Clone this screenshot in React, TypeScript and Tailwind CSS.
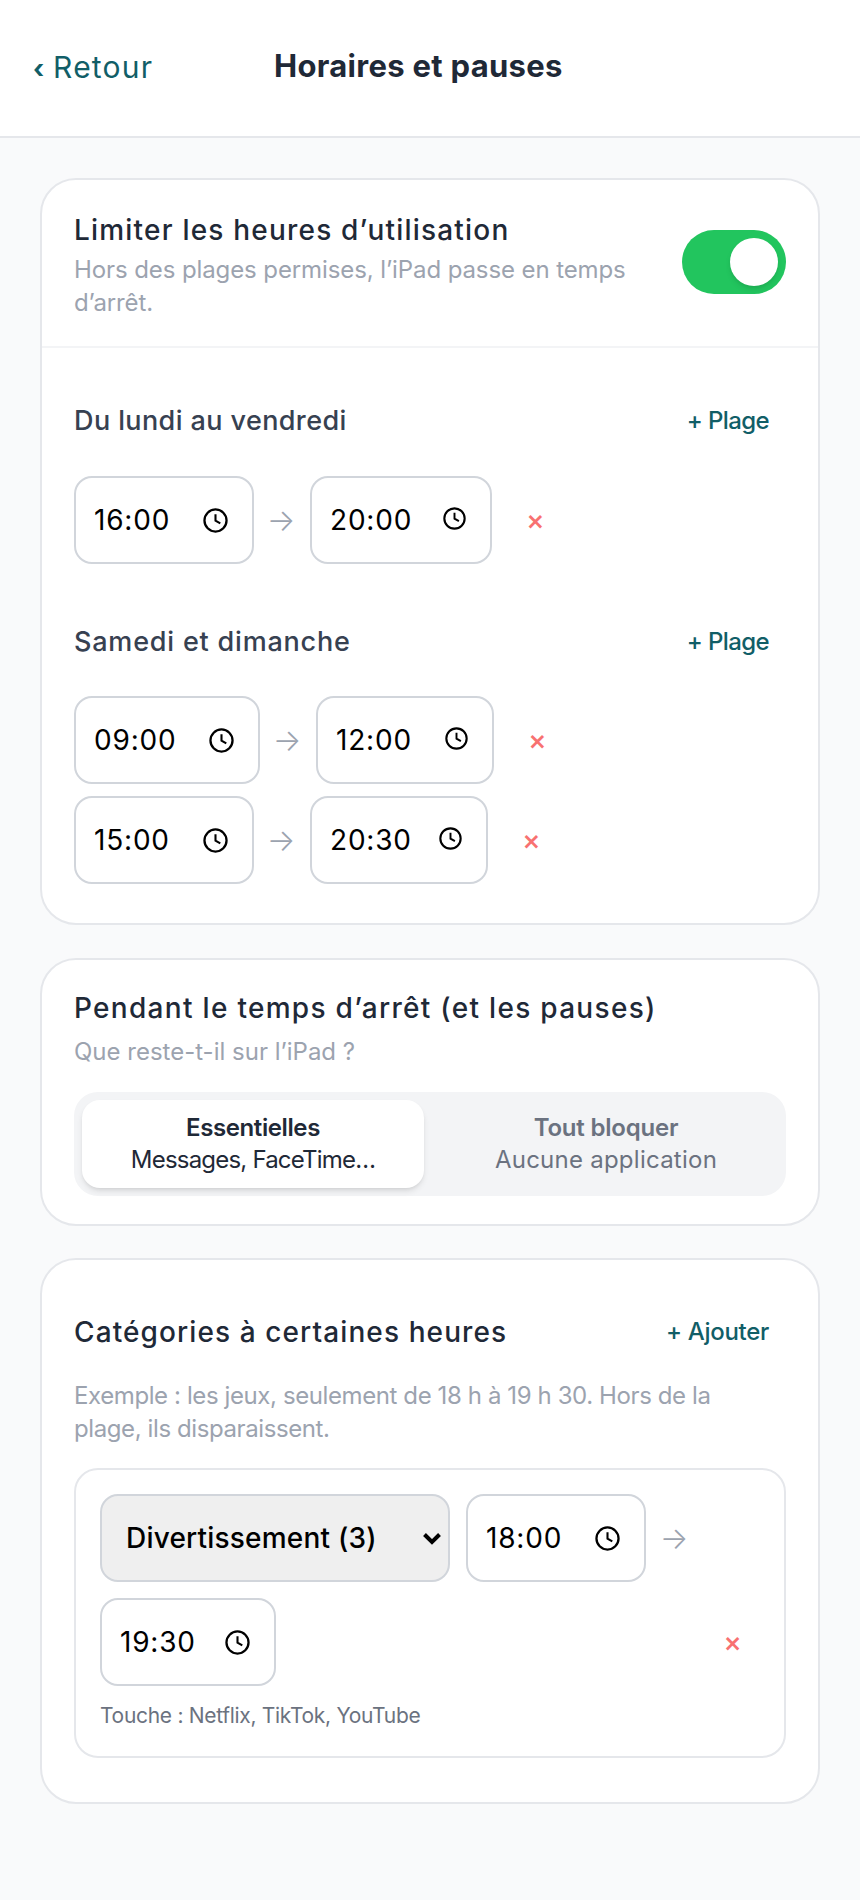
import React from "react";

function Clock({ size = 25 }: { size?: number }) {
  return (
    <svg width={size} height={size} viewBox="0 0 24 24" fill="none" stroke="#000" strokeWidth="2.2" className={`shrink-0 ${size < 25 ? "mb-[3px]" : ""}`}>
      <circle cx="12" cy="12" r="10.6" />
      <path d="M12 6v6.2l4.6 2.6" strokeWidth="2" />
    </svg>
  );
}

function TimeBox({ t, w, size }: { t: string; w: string; size?: number }) {
  return (
    <div className={`${w} h-[88px] shrink-0 rounded-[18px] border-2 border-[#d1d5db] bg-white pl-[18px] pr-[24px] flex items-center justify-between text-[28px] text-black tracking-[0.8px]`}>
      <span>{t}</span>
      <Clock size={size} />
    </div>
  );
}

function Arrow({ cls = "" }: { cls?: string }) {
  return <span className={`text-[#9ca3af] text-[30px] font-light leading-none w-[24px] flex justify-center shrink-0 ${cls}`}>→</span>;
}

function Cross({ cls = "" }: { cls?: string }) {
  return <span className={`text-[#f87171] text-[28px] font-medium leading-none ${cls}`}>×</span>;
}

function Row({ a, aw, b, bw, mt = "" }: { a: string; aw: string; b: string; bw: string; mt?: string }) {
  return (
    <div className={`flex items-center gap-[15px] ${mt}`}>
      <TimeBox t={a} w={aw} />
      <Arrow cls="mr-[2px]" />
      <TimeBox t={b} w={bw} size={23} />
      <Cross cls="ml-[19px]" />
    </div>
  );
}

export default function App() {
  return (
    <div className="min-h-[1900px] bg-[#f9fafb] [font-family:Inter,sans-serif]">
      <header className="h-[138px] bg-white border-b-2 border-[#e5e7eb] flex items-center px-[33px]">
        <span className="text-[30px] text-[#115e67] w-[241px] pb-[1px] tracking-[1.2px]">
          <span className="font-bold text-[26px] mr-[-2px]">‹</span> Retour
        </span>
        <h1 className="text-[31px] font-bold text-[#1f2937] tracking-[0.3px] pb-[4px]">Horaires et pauses</h1>
      </header>

      <main className="px-[40px] pt-[40px] flex flex-col gap-[33px]">
        <section className="rounded-[36px] border-2 border-[#e5e7eb] bg-white">
          <div className="h-[168px] border-b-2 border-[#f3f4f6] pl-[32px] pr-[32px] pt-[30px] flex justify-between">
            <div className="w-[570px]">
              <div className="text-[28px] leading-[40px] font-medium text-[#1f2937] tracking-[1.2px]">Limiter les heures d’utilisation</div>
              <div className="text-[24px] leading-[33px] text-[#9ca3af] tracking-[-0.1px] mt-[3px]">Hors des plages permises, l’iPad passe en temps d’arrêt.</div>
            </div>
            <div className="w-[104px] h-[64px] rounded-full bg-[#22c55e] mt-[20px] flex items-center justify-end pr-[8px]">
              <div className="w-[48px] h-[48px] rounded-full bg-white shadow-md" />
            </div>
          </div>
          <div className="px-[32px] pt-[53px] pb-[39px]">
            <div className="flex items-center justify-between h-[40px]">
              <span className="text-[27px] font-medium text-[#374151] tracking-[0.4px]">Du lundi au vendredi</span>
              <span className="text-[24px] font-medium text-[#115e67] pr-[17px] tracking-[-0.6px]">+ Plage</span>
            </div>
            <Row a="16:00" aw="w-[180px]" b="20:00" bw="w-[182px]" mt="mt-[35px]" />
            <div className="flex items-center justify-between h-[40px] mt-[58px]">
              <span className="text-[27px] font-medium text-[#374151] tracking-[0.8px]">Samedi et dimanche</span>
              <span className="text-[24px] font-medium text-[#115e67] pr-[17px] tracking-[-0.6px]">+ Plage</span>
            </div>
            <Row a="09:00" aw="w-[186px]" b="12:00" bw="w-[178px]" mt="mt-[34px]" />
            <Row a="15:00" aw="w-[180px]" b="20:30" bw="w-[178px]" mt="mt-[12px]" />
          </div>
        </section>

        <section className="rounded-[36px] border-2 border-[#e5e7eb] bg-white px-[32px] pt-[28px] pb-[28px]">
          <div className="text-[28px] leading-[40px] font-medium text-[#1f2937] tracking-[1.3px]">Pendant le temps d’arrêt (et les pauses)</div>
          <div className="text-[24px] leading-[33px] text-[#9ca3af] mt-[7px]">Que reste-t-il sur l’iPad ?</div>
          <div className="mt-[24px] h-[104px] rounded-[24px] bg-[#f3f4f6] p-[8px] flex">
            <div className="w-[342px] rounded-[18px] bg-white shadow-md flex flex-col items-center justify-center">
              <span className="text-[24px] leading-[32px] font-semibold text-[#1f2937] tracking-[-0.4px]">Essentielles</span>
              <span className="text-[24px] leading-[32px] text-[#1f2937] tracking-[-0.8px]">Messages, FaceTime…</span>
            </div>
            <div className="flex-1 ml-[10px] flex flex-col items-center justify-center">
              <span className="text-[24px] leading-[32px] font-semibold text-[#6b7280] tracking-[-0.2px]">Tout bloquer</span>
              <span className="text-[24px] leading-[32px] text-[#6b7280] tracking-[0.25px]">Aucune application</span>
            </div>
          </div>
        </section>

        <section className="rounded-[36px] border-2 border-[#e5e7eb] bg-white px-[32px] pt-[52px] pb-[44px] -mt-[1px]">
          <div className="flex items-center justify-between h-[40px]">
            <span className="text-[28px] font-medium text-[#1f2937] tracking-[1.1px]">Catégories à certaines heures</span>
            <span className="text-[24px] font-medium text-[#115e67] pr-[17px] tracking-[-0.3px]">+ Ajouter</span>
          </div>
          <div className="w-[660px] text-[24px] leading-[33px] text-[#9ca3af] tracking-[-0.4px] mt-[27px]">Exemple : les jeux, seulement de 18 h à 19 h 30. Hors de la plage, ils disparaissent.</div>
          <div className="mt-[23px] rounded-[24px] border-2 border-[#e5e7eb] pl-[24px] pr-[42px] pt-[24px] pb-[25px]">
            <div className="flex items-center gap-[16px]">
              <div className="relative shrink-0">
                <select className="block appearance-none w-[350px] h-[88px] rounded-[18px] border-2 border-[#d1d5db] bg-[#efefef] text-[28px] text-black pl-[24px] pr-[4px] font-medium tracking-[0.2px]" defaultValue="d">
                  <option value="d">Divertissement (3)</option>
                </select>
                <svg width="20" height="13" viewBox="0 0 20 13" fill="none" stroke="#000" strokeWidth="4" className="absolute right-[8px] top-[38px] pointer-events-none">
                  <path d="M2.5 2.5L10 10l7.5-7.5" />
                </svg>
              </div>
              <TimeBox t="18:00" w="w-[180px]" />
              <Arrow />
            </div>
            <div className="flex items-center justify-between mt-[16px]">
              <TimeBox t="19:30" w="w-[176px]" />
              <Cross />
            </div>
            <div className="text-[21px] leading-[30px] text-[#6b7280] tracking-[-0.3px] mt-[15px]">Touche : Netflix, TikTok, YouTube</div>
          </div>
        </section>
      </main>
    </div>
  );
}
